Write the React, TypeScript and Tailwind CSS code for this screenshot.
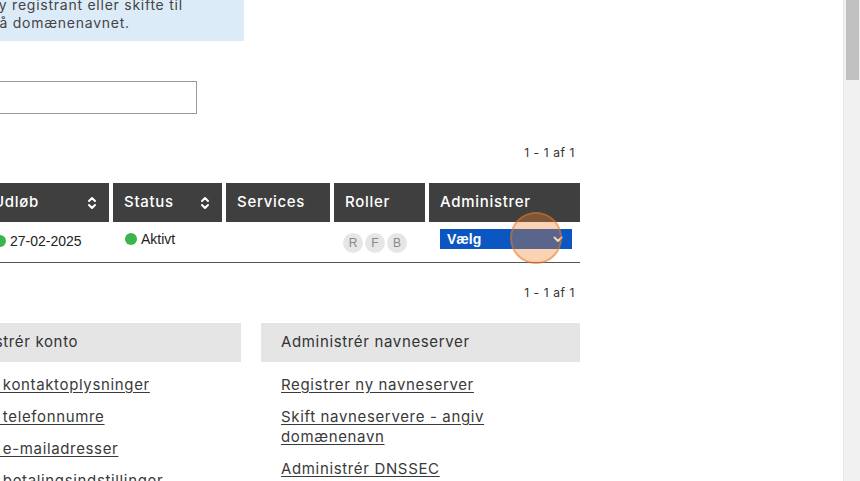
import React from 'react';

const geo = { fontFamily: 'Inter, "Noto Sans", sans-serif' };
const arial = { fontFamily: '"Liberation Sans", Arial, sans-serif' };

const SortIcon: React.FC = () => (
    <svg width="10" height="16" viewBox="0 0 10 16" fill="none" stroke="white" strokeWidth="2" strokeLinecap="round" strokeLinejoin="round">
        <path d="M2 6 L5 3 L8 6" />
        <path d="M2 10 L5 13 L8 10" />
    </svg>
);

const Dot: React.FC = () => <span className="inline-block h-3 w-3 shrink-0 rounded-full bg-[#3cb44b]" />;

const HeaderCell: React.FC<{ label: string; sortable?: boolean }> = ({ label, sortable }) => (
    <div className="flex h-[39px] items-center justify-between bg-[#3f3f3f] pl-[11px] pr-3 text-[15px] font-medium tracking-[0.7px] text-white" style={geo}>
        <span>{label}</span>
        {sortable && <SortIcon />}
    </div>
);

const Pager: React.FC = () => (
    <div className="flex justify-end pr-[5px] text-[12px] leading-4 tracking-[0.6px] text-[#333]" style={geo}>
        1 - 1 af 1
    </div>
);

const Panel: React.FC<{ title: string; links: string[]; shift?: boolean }> = ({ title, links, shift }) => (
    <div>
        <div className="flex h-[39px] items-center bg-[#e5e5e5] px-5 text-[15px] tracking-[0.65px] text-[#333]" style={geo}>
            {title}
        </div>
        <ul
            className={`mt-[13px] flex flex-col gap-3 pr-5 text-[15px] leading-5 tracking-[0.65px] text-[#3a3a3a] ${shift ? 'pl-[14px]' : 'pl-5'}`}
            style={geo}
        >
            {links.map((l) => (
                <li key={l}>
                    <a href="#" className="underline underline-offset-2">{l}</a>
                </li>
            ))}
        </ul>
    </div>
);

const App: React.FC = () => {
    return (
        <div className="flex h-[481px] w-[860px] overflow-hidden bg-white">
            <main className="relative flex-1 overflow-hidden">
                <div className="ml-[-417px] mt-[-20px] w-[997px]">
                    {/* info box */}
                    <div className="w-[661px] bg-[#dcebf8] pt-4 pb-[9px] text-[14px] leading-[18px] tracking-[0.75px] text-[#444]" style={geo}>
                        <div className="ml-auto w-[254px] whitespace-nowrap">
                            <div>ny registrant eller skifte til</div>
                            <div>på domænenavnet.</div>
                        </div>
                    </div>

                    <input className="mt-10 block h-[33px] w-[614px] border border-[#999] bg-white outline-none" />

                    <div className="mt-[31px]">
                        <Pager />
                    </div>

                    {/* table */}
                    <div className="mt-[22px]">
                        <div className="grid grid-cols-[395px_127px_109px_104px_91px_151px] gap-x-1">
                            <HeaderCell label="Domænenavn" sortable />
                            <HeaderCell label="Udløb" sortable />
                            <HeaderCell label="Status" sortable />
                            <HeaderCell label="Services" />
                            <HeaderCell label="Roller" />
                            <HeaderCell label="Administrer" />
                        </div>
                        <div className="grid h-[41px] grid-cols-[395px_127px_109px_104px_91px_151px] gap-x-1 border-b border-[#555] text-[14px] text-[#222]" style={arial}>
                            <div className="px-[10px] pt-[10px]">eksempel.dk</div>
                            <div className="flex items-center gap-1 pl-3 pb-[2px]">
                                <Dot />
                                <span>27-02-2025</span>
                            </div>
                            <div className="flex items-center gap-1 pl-3 pb-[6px]">
                                <Dot />
                                <span>Aktivt</span>
                            </div>
                            <div />
                            <div className="flex items-center gap-[2px] pl-[9px] pt-[2px]">
                                {['R', 'F', 'B'].map((r) => (
                                    <span key={r} className="flex h-5 w-5 items-center justify-center rounded-full bg-[#e6e6e6] text-[12px] text-[#888]">
                                        {r}
                                    </span>
                                ))}
                            </div>
                            <div className="relative pl-[11px] pr-2 pt-[7px]">
                                <div className="flex h-5 items-center justify-between bg-[#0c56c2] pl-[7px] pr-[9px] text-[14px] font-semibold text-white">
                                    <span>Vælg</span>
                                    <svg width="10" height="7" viewBox="0 0 10 7" fill="none" stroke="white" strokeWidth="2" strokeLinecap="round" strokeLinejoin="round">
                                        <path d="M1.5 1.5 L5 5 L8.5 1.5" />
                                    </svg>
                                </div>
                                <span className="absolute left-[81px] top-[-10px] h-[52px] w-[52px] rounded-full border-2 border-[rgba(230,120,40,0.45)] bg-[rgba(238,129,38,0.35)]" />
                            </div>
                        </div>
                    </div>

                    <div className="mt-[22px]">
                        <Pager />
                    </div>

                    {/* panels */}
                    <div className="mt-[22px] grid grid-cols-3 gap-5">
                        <Panel title="Administrér domænenavn" links={['Opret domænenavn', 'Forny domænenavn']} />
                        <Panel
                            title="Administrér konto"
                            shift
                            links={['Opdatér kontaktoplysninger', 'Opdatér telefonnumre', 'Opdatér e-mailadresser', 'Opdatér betalingsindstillinger']}
                        />
                        <Panel
                            title="Administrér navneserver"
                            links={['Registrer ny navneserver', 'Skift navneservere - angiv domænenavn', 'Administrér DNSSEC']}
                        />
                    </div>
                </div>
            </main>

            {/* scrollbar */}
            <div className="flex w-[17px] shrink-0 justify-center border-l border-[#e8e8e8] bg-[#f1f1f1]">
                <div className="h-[80px] w-[13px] bg-[#c1c1c1]" />
            </div>
        </div>
    );
};

export default App;
